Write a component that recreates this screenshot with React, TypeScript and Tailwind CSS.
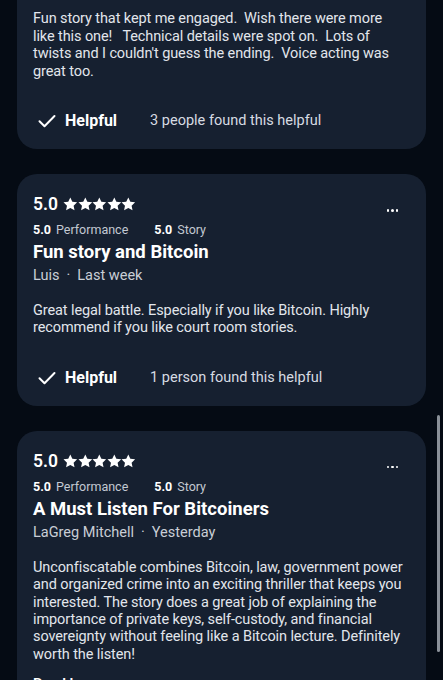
import React from "react";

const font = { fontFamily: "Roboto, 'Noto Sans', sans-serif" };

function Stars() {
  return (
    <div className="flex items-center ml-[5px]">
      {[0, 1, 2, 3, 4].map((i) => (
        <svg key={i} width="14.6" height="14" viewBox="1.2 1.2 21.6 21.2" fill="#ffffff">
          <path d="M12 1.8l3.1 6.6 7.2.9-5.3 5 1.4 7.1L12 17.9l-6.4 3.5L7 14.3l-5.3-5 7.2-.9z" />
        </svg>
      ))}
    </div>
  );
}

function Check() {
  return (
    <svg width="18" height="14" viewBox="0 0 18 14" fill="none" stroke="#ffffff" strokeWidth="2" strokeLinecap="round" strokeLinejoin="round">
      <path d="M1.5 7.2l5 5L16.5 2" />
    </svg>
  );
}

function HelpfulRow({ count }: { count: string }) {
  return (
    <div className="flex items-center h-[30px]">
      <div className="w-[32px] pl-[5px] flex items-center">
        <Check />
      </div>
      <span className="text-[16px] font-bold text-white leading-[20px]">Helpful</span>
      <span className="ml-[33px] text-[14.5px] text-[#d6dbe2] leading-[20px]">{count}</span>
    </div>
  );
}

function Review({
  title,
  author,
  when,
  body,
  count,
  readLess,
}: {
  title: string;
  author: string;
  when: string;
  body: string;
  count?: string;
  readLess?: boolean;
}) {
  return (
    <div className="bg-[#162030] rounded-[20px] pl-[16px] pr-[14px] pt-[19px] pb-[13px]">
      <div className="flex items-start justify-between">
        <div>
          <div className="flex items-center h-[22px]">
            <span className="text-[17.5px] font-semibold text-white leading-[22px]">5.0</span>
            <Stars />
          </div>
          <div className="mt-[6px] flex items-center leading-[18px] text-[12.5px]">
            <span className="font-bold text-white">5.0</span>
            <span className="ml-[5px] text-[#c3c9d2]">Performance</span>
            <span className="ml-[26px] font-bold text-white">5.0</span>
            <span className="ml-[5px] text-[#c3c9d2]">Story</span>
          </div>
        </div>
        <div className="mt-[16px] mr-[14px] flex gap-[2px]">
          <span className="w-[2.5px] h-[2.5px] bg-white rounded-full" />
          <span className="w-[2.5px] h-[2.5px] bg-white rounded-full" />
          <span className="w-[2.5px] h-[2.5px] bg-white rounded-full" />
        </div>
      </div>
      <div className="mt-[1px] text-[18.5px] font-bold text-white leading-[24px]">{title}</div>
      <div className="mt-[1px] text-[14.5px] text-[#c9ced6] leading-[22px]">
        {author}
        <span className="mx-[7px]">·</span>
        {when}
      </div>
      <p className="mt-[15px] text-[14.5px] text-[#e2e6ec] leading-[17.4px] tracking-[-0.1px] whitespace-pre-wrap">{body}</p>
      {count && (
        <div className="mt-[26px]">
          <HelpfulRow count={count} />
        </div>
      )}
      {readLess && <div className="mt-[12px] text-[14.5px] font-semibold text-white leading-[20px]">Read less</div>}
    </div>
  );
}

export default function App() {
  return (
    <div className="w-[443px] h-[680px] bg-[#050b14] overflow-hidden relative" style={font}>
      <div className="flex flex-col gap-[25px] pl-[17px] pr-[17px]">
        <div className="bg-[#162030] rounded-b-[20px] pl-[16px] pr-[30px] pt-[10px] pb-[13px]">
          <p className="text-[14.5px] text-[#e2e6ec] leading-[17.5px] tracking-[-0.1px] whitespace-pre-wrap">
            {"Fun story that kept me engaged.  Wish there were more like this one!   Technical details were spot on.  Lots of twists and I couldn't guess the ending.  Voice acting was great too."}
          </p>
          <div className="mt-[26px]">
            <HelpfulRow count="3 people found this helpful" />
          </div>
        </div>
        <Review
          title="Fun story and Bitcoin"
          author="Luis"
          when="Last week"
          body="Great legal battle. Especially if you like Bitcoin. Highly recommend if you like court room stories."
          count="1 person found this helpful"
        />
        <Review
          title="A Must Listen For Bitcoiners"
          author="LaGreg Mitchell"
          when="Yesterday"
          body="Unconfiscatable combines Bitcoin, law, government power and organized crime into an exciting thriller that keeps you interested. The story does a great job of explaining the importance of private keys, self-custody, and financial sovereignty without feeling like a Bitcoin lecture. Definitely worth the listen!"
          readLess
        />
      </div>
      <div className="absolute left-[437px] top-[415px] w-[3px] h-[237px] rounded-full bg-[#8a9098]" />
    </div>
  );
}
